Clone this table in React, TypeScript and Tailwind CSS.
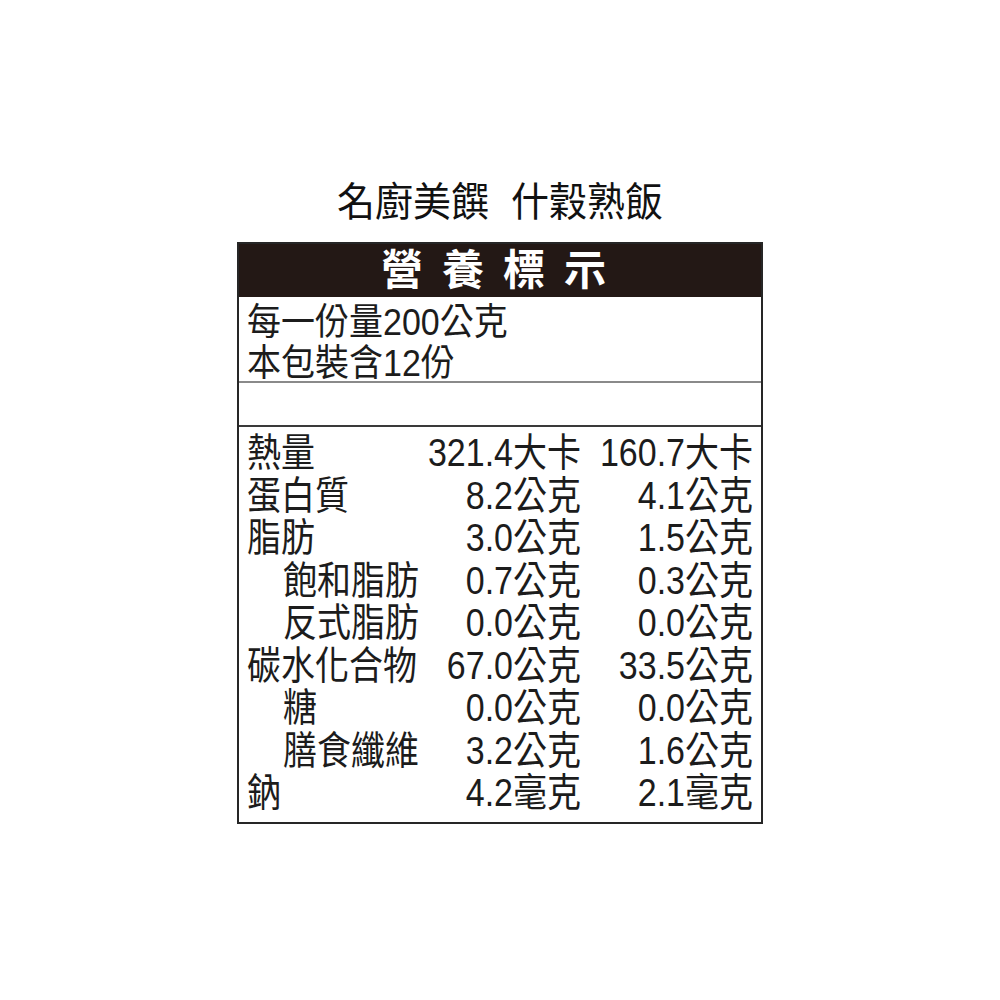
const font = { fontFamily: '"Liberation Sans", "Noto Sans CJK TC", sans-serif' }

type Row = { label: string; indent?: boolean; a: string; b: string }

const rows: Row[] = [
  { label: '熱量', a: '321.4大卡', b: '160.7大卡' },
  { label: '蛋白質', a: '8.2公克', b: '4.1公克' },
  { label: '脂肪', a: '3.0公克', b: '1.5公克' },
  { label: '飽和脂肪', indent: true, a: '0.7公克', b: '0.3公克' },
  { label: '反式脂肪', indent: true, a: '0.0公克', b: '0.0公克' },
  { label: '碳水化合物', a: '67.0公克', b: '33.5公克' },
  { label: '糖', indent: true, a: '0.0公克', b: '0.0公克' },
  { label: '膳食纖維', indent: true, a: '3.2公克', b: '1.6公克' },
  { label: '鈉', a: '4.2毫克', b: '2.1毫克' },
]

export default function App() {
  return (
    <div className="w-[1000px] h-[1000px] bg-white pt-[183px] text-[#1c1c1c]" style={font}>
      <div className="flex justify-center gap-[22px] text-[38px] leading-[38px] text-[#111] scale-y-[1.05]">
        <span>名廚美饌</span>
        <span>什穀熟飯</span>
      </div>

      <div className="w-[526px] mx-auto mt-[21px] border-2 border-[#262626]">
        <div className="h-[53px] bg-[#231815] flex items-center justify-center text-white font-bold text-[42px] tracking-[19px] leading-none pl-[6px]">
          營養標示
        </div>

        <div className="px-[8px] pt-[3px] text-[34px] border-b-2 border-[#8a8a8a]">
          <div className="h-[43px] flex items-center leading-[34px] scale-y-[1.1]">每一份量200公克</div>
          <div className="h-[38px] flex items-end leading-[34px] scale-y-[1.1] origin-bottom">本包裝含12份</div>
        </div>

        <div className="h-[42px]" />

        <div className="border-t-2 border-[#3a3a3a] px-[8px] pt-[4px] pb-[8px] text-[34px]">
          {rows.map((r) => (
            <div key={r.label} className="grid grid-cols-[1fr_auto_172px] h-[42.5px] items-center leading-[34px] whitespace-nowrap scale-y-[1.15]">
              <span className={r.indent ? 'pl-[36px]' : ''}>{r.label}</span>
              <span className="text-right">{r.a}</span>
              <span className="text-right">{r.b}</span>
            </div>
          ))}
        </div>
      </div>
    </div>
  )
}
